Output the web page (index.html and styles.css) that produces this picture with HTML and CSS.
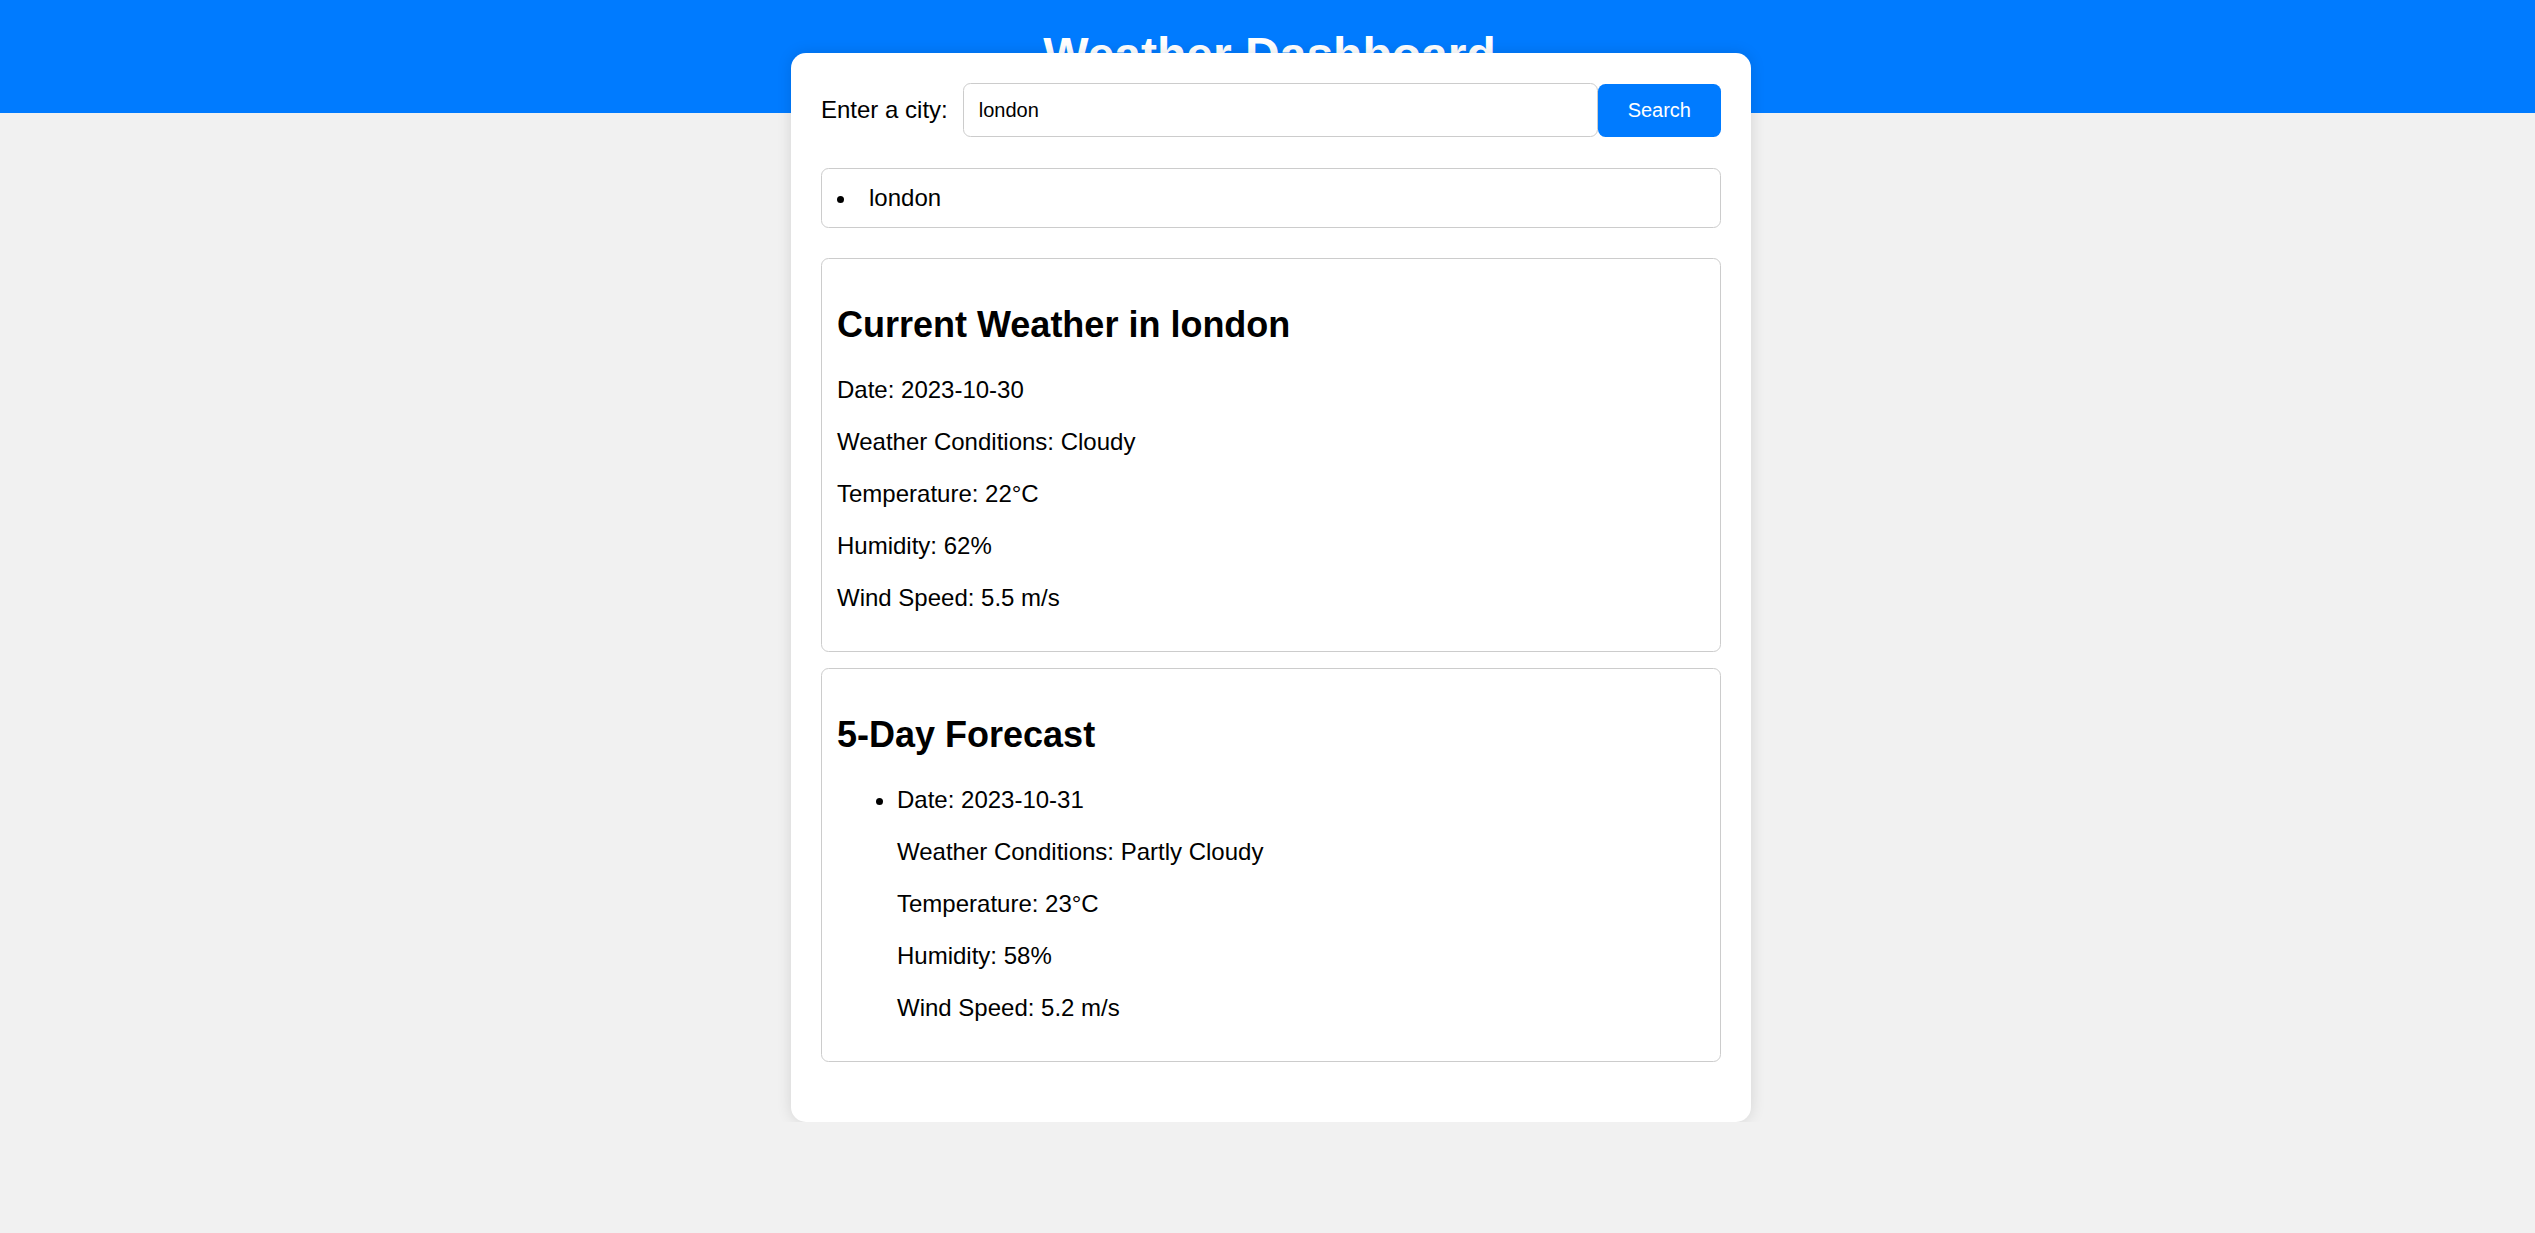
FILE: index.html
```html
<!DOCTYPE html>
<html lang="en">
<head>
<meta charset="UTF-8">
<title>Weather Dashboard</title>
<link rel="stylesheet" href="styles.css">
</head>
<body>
<header class="site-header">
  <h1 class="site-title">Weather Dashboard</h1>
</header>
<main class="page">
  <div class="container">
    <form class="search-form">
      <label class="search-label" for="city">Enter a city:</label>
      <input class="search-input" id="city" type="text" value="london">
      <button class="search-button" type="button">Search</button>
    </form>
    <ul class="history">
      <li class="history-item">london</li>
    </ul>
    <section class="panel current">
      <h2 class="panel-title">Current Weather in london</h2>
      <p class="info">Date: 2023-10-30</p>
      <p class="info">Weather Conditions: Cloudy</p>
      <p class="info">Temperature: 22°C</p>
      <p class="info">Humidity: 62%</p>
      <p class="info">Wind Speed: 5.5 m/s</p>
    </section>
    <section class="panel forecast">
      <h2 class="panel-title">5-Day Forecast</h2>
      <ul class="forecast-list">
        <li class="forecast-item">
          <p class="info">Date: 2023-10-31</p>
          <p class="info">Weather Conditions: Partly Cloudy</p>
          <p class="info">Temperature: 23°C</p>
          <p class="info">Humidity: 58%</p>
          <p class="info">Wind Speed: 5.2 m/s</p>
        </li>
      </ul>
    </section>
  </div>
</main>
</body>
</html>
```
FILE: styles.css
```css
html, body {
  margin: 0;
  padding: 0;
}

body {
  background: #f1f1f1;
  font-family: "Liberation Sans", Arial, sans-serif;
  font-size: 24px;
  color: #000;
}

.site-header {
  background: #007bff;
  color: #fff;
  text-align: center;
  padding: 27px 0 31px 4px;
}

.site-title {
  margin: 0;
  font-size: 48px;
  font-weight: bold;
  line-height: normal;
}

.page {
  padding-left: 7px;
}

.container {
  box-sizing: border-box;
  width: 960px;
  margin: -60px auto 0;
  padding: 30px;
  background: #fff;
  border-radius: 15px;
  box-shadow: 0 0 15px rgba(0, 0, 0, 0.12);
  position: relative;
}

.search-form {
  display: flex;
  align-items: center;
  margin: 0;
}

.search-label {
  margin-right: 15px;
  font-size: 24px;
}

.search-input {
  flex: 1;
  box-sizing: border-box;
  height: 54px;
  padding: 0 15px;
  border: 1px solid #ccc;
  border-radius: 7.5px;
  font-family: "Liberation Sans", Arial, sans-serif;
  font-size: 20px;
  color: #000;
  outline: none;
}

.search-button {
  padding: 15px 30px;
  background: #007bff;
  color: #fff;
  border: none;
  border-radius: 7.5px;
  font-family: "Liberation Sans", Arial, sans-serif;
  font-size: 20px;
  line-height: normal;
}

.history {
  margin: 31px 0 0;
  padding: 15px;
  border: 1px solid #ccc;
  border-radius: 7.5px;
  list-style-position: inside;
}

.history-item {
  padding-left: 0;
}

.panel {
  padding: 15px;
  border: 1px solid #ccc;
  border-radius: 7.5px;
}

.current {
  margin-top: 30px;
}

.forecast {
  margin-top: 16px;
  margin-bottom: 30px;
}

.panel-title {
  font-size: 36px;
  font-weight: bold;
  margin: 29.9px 0;
}

.info {
  margin: 24px 0;
}

.forecast-list {
  margin: 24px 0;
  padding-left: 60px;
}
```
